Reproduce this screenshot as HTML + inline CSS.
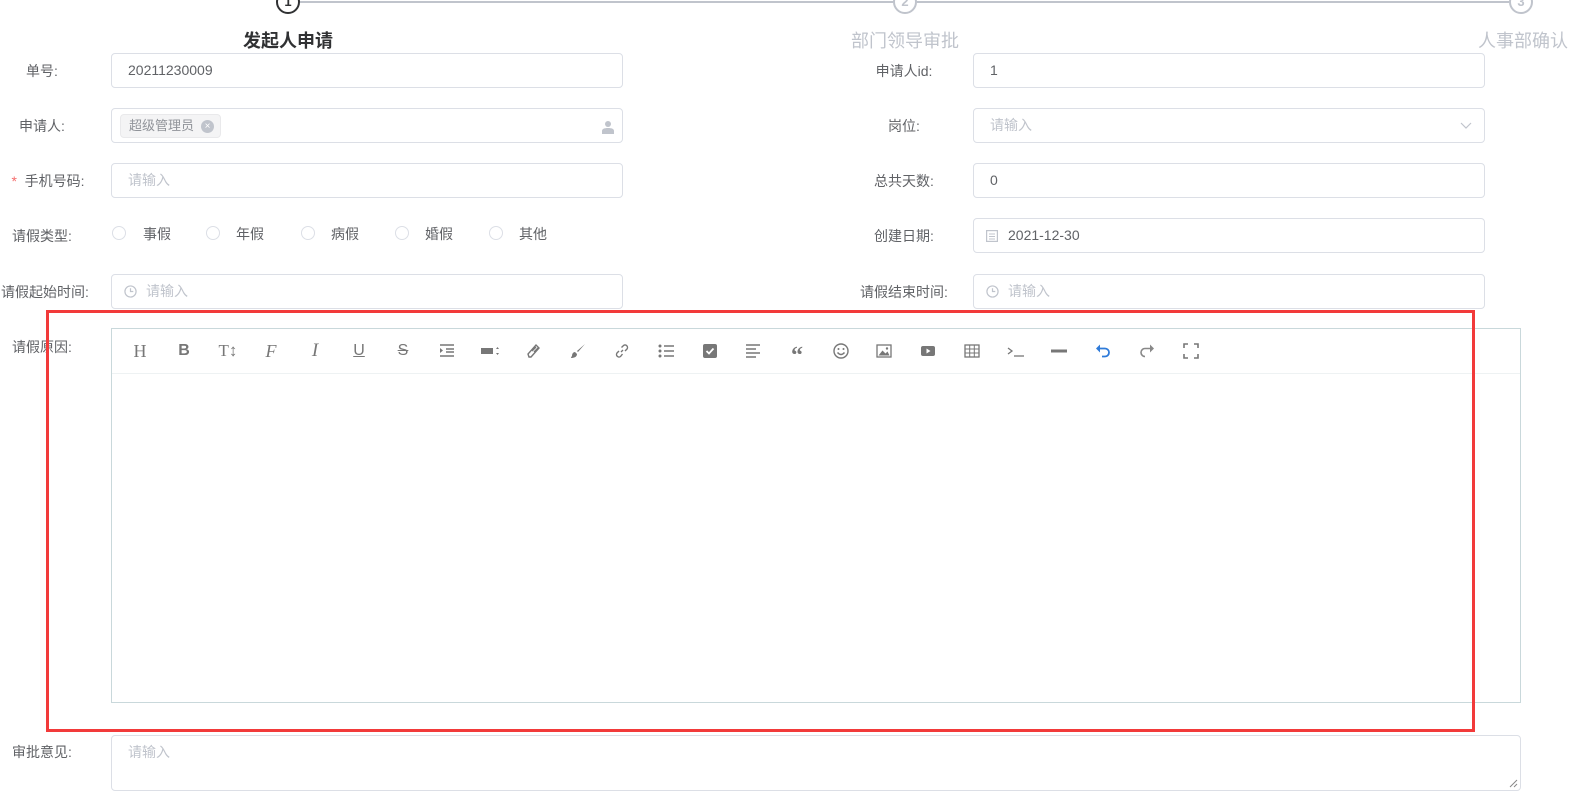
<!DOCTYPE html>
<html><head><meta charset="utf-8"><style>
*{margin:0;padding:0;box-sizing:border-box}
body{width:1576px;height:799px;background:#fff;position:relative;overflow:hidden;font-family:"Liberation Sans","Noto Sans CJK SC",sans-serif;font-size:14px;color:#606266}
.a{position:absolute}
.lbl{position:absolute;width:180px;text-align:center;line-height:20px;white-space:nowrap}
.inp{position:absolute;height:35px;border:1px solid #dcdfe6;border-radius:4px;background:#fff;line-height:33px;padding-left:16px;color:#606266}
.ph{color:#c0c4cc}
.circ{position:absolute;width:24px;height:24px;border:2px solid #c0c4cc;border-radius:50%;text-align:center;line-height:20px;font-size:13px;color:#c0c4cc;background:#fff;font-weight:bold}
.radio{position:absolute;width:14px;height:14px;border:1px solid #dcdfe6;border-radius:50%}
.ic{position:absolute;top:341px;width:20px;height:20px;margin-left:-10px;text-align:center;color:#777;font-size:16px;line-height:20px}
.ic svg{width:16px;height:16px;margin-top:2px}
</style></head><body>
<div class="a" style="left:300px;top:1px;width:593px;height:2px;background:#c0c4cc"></div>
<div class="a" style="left:917px;top:1px;width:592px;height:2px;background:#c0c4cc"></div>
<div class="circ" style="left:276px;top:-10px;border-color:#303133;color:#303133">1</div>
<div class="circ" style="left:893px;top:-10px">2</div>
<div class="circ" style="left:1509px;top:-10px">3</div>
<div class="a" style="left:200px;top:27px;width:176px;text-align:center;font-size:18px;font-weight:bold;color:#303133">发起人申请</div>
<div class="a" style="left:817px;top:27px;width:176px;text-align:center;font-size:18px;color:#c0c4cc">部门领导审批</div>
<div class="a" style="left:1478px;top:27px;width:120px;font-size:18px;color:#c0c4cc;white-space:nowrap">人事部确认</div>

<div class="lbl" style="left:-48px;top:61px">单号:</div>
<div class="lbl" style="left:-48px;top:116px">申请人:</div>
<div class="lbl" style="left:-42px;top:171px"><span style="color:#f56c6c">*</span>&nbsp; 手机号码:</div>
<div class="lbl" style="left:-48px;top:226px">请假类型:</div>
<div class="lbl" style="left:-45px;top:282px">请假起始时间:</div>
<div class="lbl" style="left:-48px;top:337px">请假原因:</div>
<div class="lbl" style="left:-48px;top:742px">审批意见:</div>

<div class="inp" style="left:111px;top:53px;width:512px">20211230009</div>
<div class="inp" style="left:111px;top:108px;width:512px;padding-left:8px">
 <span class="a" style="left:8px;top:5px;height:24px;line-height:22px;padding:0 26px 0 8px;background:#f4f4f5;border:1px solid #e9e9eb;border-radius:4px;color:#909399;font-size:13px">超级管理员<span class="a" style="right:6px;top:5px;width:13px;height:13px;border-radius:50%;background:#c0c4cc;color:#fff;font-size:10px;line-height:13px;text-align:center">×</span></span>
 <svg class="a" style="right:8px;top:11px" width="12" height="14" viewBox="0 0 12 14"><circle cx="6" cy="4" r="3" fill="#c0c4cc"/><path d="M0 14v-3c0-2 2-3 6-3s6 1 6 3v3z" fill="#c0c4cc"/></svg>
</div>
<div class="inp ph" style="left:111px;top:163px;width:512px">请输入</div>
<div class="radio" style="left:112px;top:226px"></div><div class="a" style="left:143px;top:224px;color:#606266">事假</div>
<div class="radio" style="left:206px;top:226px"></div><div class="a" style="left:236px;top:224px">年假</div>
<div class="radio" style="left:301px;top:226px"></div><div class="a" style="left:331px;top:224px">病假</div>
<div class="radio" style="left:395px;top:226px"></div><div class="a" style="left:425px;top:224px">婚假</div>
<div class="radio" style="left:489px;top:226px"></div><div class="a" style="left:519px;top:224px">其他</div>
<div class="inp ph" style="left:111px;top:274px;width:512px;padding-left:34px"><svg class="a" style="left:12px;top:10px" width="13" height="13" viewBox="0 0 14 14"><circle cx="7" cy="7" r="6" fill="none" stroke="#c0c4cc" stroke-width="1.3"/><path d="M7 3.5V7h3" fill="none" stroke="#c0c4cc" stroke-width="1.3"/></svg>请输入</div>

<div class="lbl" style="left:814px;top:61px">申请人id:</div>
<div class="lbl" style="left:814px;top:116px">岗位:</div>
<div class="lbl" style="left:814px;top:171px">总共天数:</div>
<div class="lbl" style="left:814px;top:226px">创建日期:</div>
<div class="lbl" style="left:814px;top:282px">请假结束时间:</div>
<div class="inp" style="left:973px;top:53px;width:512px">1</div>
<div class="inp ph" style="left:973px;top:108px;width:512px">请输入<svg class="a" style="right:12px;top:13px" width="12" height="8" viewBox="0 0 12 8"><path d="M1 1l5 5 5-5" fill="none" stroke="#c0c4cc" stroke-width="1.2"/></svg></div>
<div class="inp" style="left:973px;top:163px;width:512px">0</div>
<div class="inp" style="left:973px;top:218px;width:512px;padding-left:34px"><svg class="a" style="left:12px;top:10px" width="12" height="13" viewBox="0 0 12 13"><rect x="0.6" y="1.6" width="10.8" height="10.8" fill="none" stroke="#c0c4cc" stroke-width="1.2"/><path d="M3 5h6M3 7.5h6M3 10h6" stroke="#c0c4cc"/></svg>2021-12-30</div>
<div class="inp ph" style="left:973px;top:274px;width:512px;padding-left:34px"><svg class="a" style="left:12px;top:10px" width="13" height="13" viewBox="0 0 14 14"><circle cx="7" cy="7" r="6" fill="none" stroke="#c0c4cc" stroke-width="1.3"/><path d="M7 3.5V7h3" fill="none" stroke="#c0c4cc" stroke-width="1.3"/></svg>请输入</div>

<div class="a" style="left:111px;top:328px;width:1410px;height:375px;border:1px solid #c9d8db"></div>
<div class="a" style="left:112px;top:373px;width:1408px;height:1px;background:#eef2f3"></div>
<div class="ic" style="left:140px;font-family:'Liberation Serif',serif;font-size:18px">H</div>
<div class="ic" style="left:184px;font-weight:bold">B</div>
<div class="ic" style="left:228px;font-family:'Liberation Serif',serif;font-size:17px">T↕</div>
<div class="ic" style="left:271px;font-family:'Liberation Serif',serif;font-style:italic;font-size:18px">F</div>
<div class="ic" style="left:315px;font-family:'Liberation Serif',serif;font-style:italic;font-size:19px">I</div>
<div class="ic" style="left:359px;text-decoration:underline">U</div>
<div class="ic" style="left:403px;text-decoration:line-through">S</div>
<div class="ic" style="left:447px"><svg viewBox="0 0 16 16"><path d="M1 2h14M7 6h8M7 9h8M1 13h14" stroke="#777" stroke-width="1.6"/><path d="M1 5l3 2.5L1 10z" fill="#777"/></svg></div>
<div class="ic" style="left:490px"><svg viewBox="0 0 20 16" style="width:20px"><rect x="1" y="5" width="12" height="6" fill="#777"/><path d="M16 6l1.5-2 1.5 2zM16 10l1.5 2 1.5-2z" fill="#777"/></svg></div>
<div class="ic" style="left:534px"><svg viewBox="0 0 16 16"><path d="M3 14l-1-3 8-9 3 3-8 9zM6 8l4-4M8 9l4-4" fill="none" stroke="#777" stroke-width="1.4"/></svg></div>
<div class="ic" style="left:578px"><svg viewBox="0 0 16 16"><path d="M15 1L8 9l-1-1z" fill="#777"/><path d="M5 9c-2 0-3 2-3 4-1 1-1 2-1 2 3 0 6-1 6-4z" fill="#777"/></svg></div>
<div class="ic" style="left:622px"><svg viewBox="0 0 16 16"><path d="M7 9l2-2M5 8l-2 2a2.5 2.5 0 003.5 3.5L8.5 11M11 8l2-2A2.5 2.5 0 009.5 2.5L7.5 4.5" fill="none" stroke="#777" stroke-width="1.4"/></svg></div>
<div class="ic" style="left:666px"><svg viewBox="0 0 16 16"><circle cx="2" cy="3" r="1.5" fill="#777"/><circle cx="2" cy="8" r="1.5" fill="#777"/><circle cx="2" cy="13" r="1.5" fill="#777"/><path d="M6 3h10M6 8h10M6 13h10" stroke="#777" stroke-width="1.6"/></svg></div>
<div class="ic" style="left:710px"><svg viewBox="0 0 16 16"><rect x="1" y="1" width="14" height="14" rx="2" fill="#777"/><path d="M4.5 8l2.5 2.5 4.5-5" fill="none" stroke="#fff" stroke-width="1.8"/></svg></div>
<div class="ic" style="left:753px"><svg viewBox="0 0 16 16"><path d="M1 2h14M1 6h10M1 10h14M1 14h10" stroke="#777" stroke-width="1.6"/></svg></div>
<div class="ic" style="left:797px;font-family:'Liberation Serif',serif;font-weight:bold;font-size:24px;line-height:30px">“</div>
<div class="ic" style="left:841px"><svg viewBox="0 0 16 16"><circle cx="8" cy="8" r="7" fill="none" stroke="#777" stroke-width="1.4"/><circle cx="5.5" cy="6" r="1" fill="#777"/><circle cx="10.5" cy="6" r="1" fill="#777"/><path d="M4.5 9.5q3.5 4 7 0" fill="none" stroke="#777" stroke-width="1.4"/></svg></div>
<div class="ic" style="left:884px"><svg viewBox="0 0 16 16"><rect x="1" y="2" width="14" height="12" fill="none" stroke="#777" stroke-width="1.3"/><path d="M2.5 12.5l4-5 3 3 2-2 2 4z" fill="#777"/><circle cx="11" cy="5.5" r="1.2" fill="#777"/></svg></div>
<div class="ic" style="left:928px"><svg viewBox="0 0 16 16"><rect x="1" y="3" width="14" height="10" rx="2" fill="#777"/><path d="M6.5 5.5v5l4-2.5z" fill="#fff"/></svg></div>
<div class="ic" style="left:972px"><svg viewBox="0 0 16 16"><rect x="1" y="2" width="14" height="12" fill="none" stroke="#777" stroke-width="1.3"/><path d="M1 6h14M1 10h14M5.7 2v12M10.3 2v12" stroke="#777"/></svg></div>
<div class="ic" style="left:1016px"><svg viewBox="0 0 18 16" style="width:18px"><path d="M1 5l4 3-4 3" fill="none" stroke="#777" stroke-width="1.3"/><path d="M7 13h10" stroke="#777" stroke-width="1.3"/></svg></div>
<div class="ic" style="left:1059px"><svg viewBox="0 0 16 16"><rect x="0" y="6.5" width="16" height="3" fill="#777"/></svg></div>
<div class="ic" style="left:1103px"><svg viewBox="0 0 16 16"><path d="M4 5.5h6a4 4 0 010 8H7" fill="none" stroke="#2f7bd9" stroke-width="1.8"/><path d="M1 5.5l4-4v8z" fill="#2f7bd9"/></svg></div>
<div class="ic" style="left:1147px"><svg viewBox="0 0 16 16"><path d="M12 5.5H6a4 4 0 000 8" fill="none" stroke="#888" stroke-width="1.6"/><path d="M15 5.5l-4-4v8z" fill="#888"/></svg></div>
<div class="ic" style="left:1191px"><svg viewBox="0 0 16 16"><path d="M1 5V1h4M11 1h4v4M15 11v4h-4M5 15H1v-4" fill="none" stroke="#777" stroke-width="1.6"/></svg></div>

<div class="a" style="left:46px;top:310px;width:1429px;height:422px;border:3px solid #f23a3a"></div>

<div class="a" style="left:111px;top:735px;width:1410px;height:56px;border:1px solid #dcdfe6;border-radius:4px;padding:6px 16px;color:#c0c4cc;line-height:20px">请输入
<svg class="a" style="right:2px;bottom:2px" width="9" height="9" viewBox="0 0 9 9"><path d="M8 1L1 8M8 5L5 8" stroke="#888"/></svg></div>
</body></html>
